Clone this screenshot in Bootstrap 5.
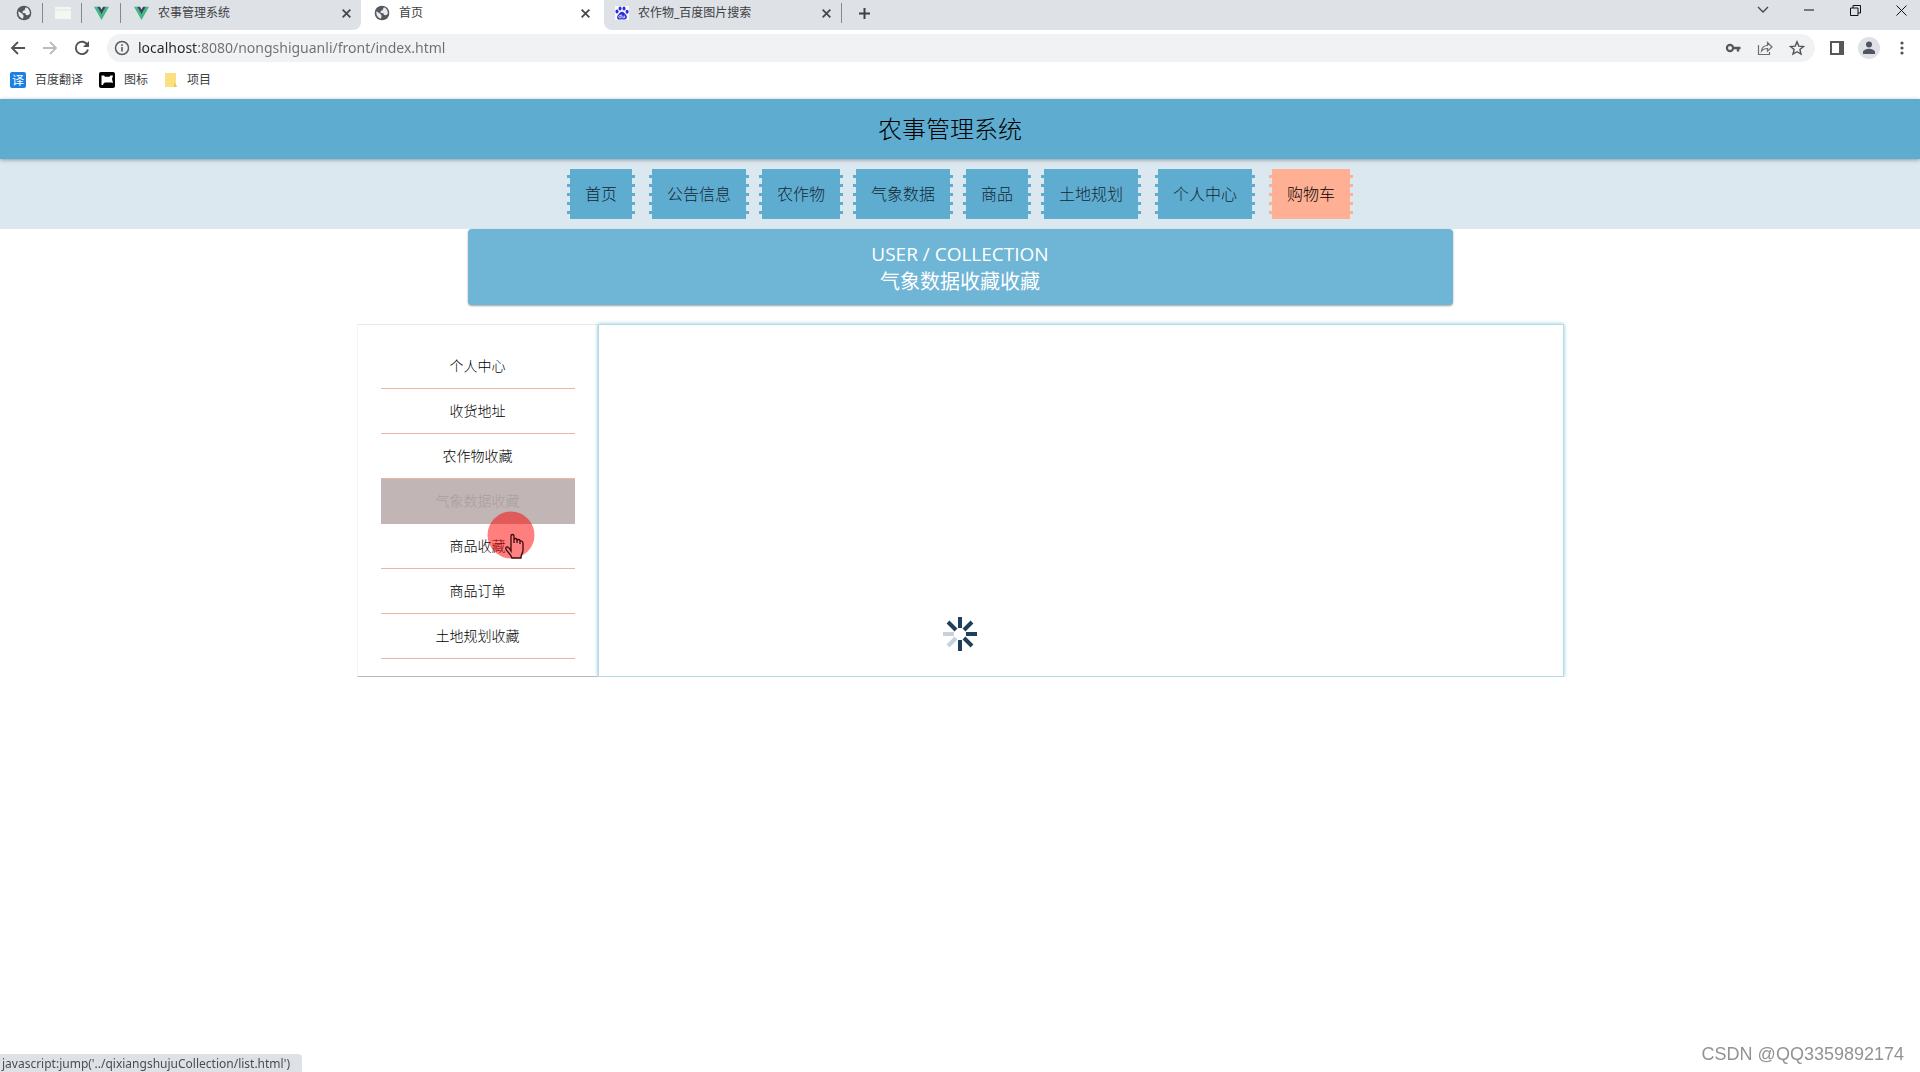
<!DOCTYPE html>
<html lang="zh-CN">
<head>
<meta charset="utf-8">
<meta name="viewport" content="width=device-width, initial-scale=1">
<title>首页</title>
<link href="https://cdn.jsdelivr.net/npm/bootstrap@5.3.0/dist/css/bootstrap.min.css" rel="stylesheet">
<style>
  :root { --sky: #5facd1; --peach: #ffaf94; --ink: #5a5d62; }
  body { font-family: "Noto Sans", "Noto Sans CJK SC", sans-serif; font-size: 14px; background: #fff; color: #222; }
  a { color: inherit; text-decoration: none; }
  button { border: 0; background: none; padding: 0; color: inherit; display: flex; align-items: center; justify-content: center; }
  svg { display: block; flex: none; }

  /* browser window */
  .tabstrip { height: 30px; background: #dee1e6; font-size: 12px; color: #3c4043; }
  .tabstrip > * { height: 100%; padding-bottom: 4px; }
  .pin { width: 39px; justify-content: center; position: relative; }
  .sep-line::after { content: ""; position: absolute; right: 0; top: 3px; height: 20px; width: 1px; background: #85888d; }
  .page-tab { width: 240px; padding: 0 9px 0 13px; gap: 9px; position: relative; }
  .page-tab.current { background: #fff; width: 243px; }
  .tab-before { border-bottom-right-radius: 8px; background: #dee1e6; }
  .page-tab.tab-after { border-bottom-left-radius: 8px; background: #dee1e6; width: 238px; padding-left: 11px; padding-right: 10px; }
  .tab-under { background: #fff; }
  .win-buttons { gap: 30px; padding-right: 11px; color: #111; padding-bottom: 10px !important; }
  .win-buttons button { width: 16px; }
  .toolbar-row { height: 35px; padding: 0 10px; color: var(--ink); }
  .toolbar-row .side-tools { gap: 16px; }
  .toolbar-row .end-tools { gap: 14px; }
  .address { height: 28px; border-radius: 14px; background: #f1f2f4; padding: 0 10px 0 7px; margin-left: 17px; margin-right: 15px; gap: 8px; }
  .address input { border: 0; outline: 0; padding: 0; font-size: 14px; height: 26px;
    background: linear-gradient(90deg, #26282b 60px, #6c6f73 60px); -webkit-background-clip: text; background-clip: text; color: transparent; }
  .bookmarks { height: 34px; padding: 0 10px 4px; gap: 16px; font-size: 12px; color: #3c4043; }
  .bookmarks a { gap: 9px; }

  /* site */
  .site-title { height: 60px; background: var(--sky); font-size: 24px; font-weight: 300; color: #000; padding: 0 20px 2px 0;
    box-shadow: 0 1px 4px rgba(0,0,0,.35); position: relative; font-family: "Noto Sans CJK SC", sans-serif; }
  .site-nav { background: #dce8f0; height: 70px; gap: 20px; font-size: 16px; font-weight: 300; font-family: "Noto Sans CJK SC", sans-serif; }
  .nav-set { gap: 16px; }
  .ticket { --tone: var(--sky); height: 50px; padding: 0 15px 2px; background: var(--tone); color: #142832; position: relative; display: flex; align-items: center; }
  .ticket::before, .ticket::after { content: ""; position: absolute; top: 6px; height: 39px; width: 3px;
    background: linear-gradient(var(--tone) 3px, transparent 3px) 0 0 / 3px 9px repeat-y; }
  .ticket::before { left: -3px; }
  .ticket::after { right: -3px; }
  .ticket.cart { --tone: var(--peach); color: #000; }
  .banner { max-width: 985px; height: 76px; padding-top: 2px; background: #6fb5d6; border-radius: 4px; box-shadow: 0 1px 2px rgba(60,40,40,.45);
    color: #fff; font-size: 20px; line-height: 28px; text-align: center; font-family: "Open Sans", "Noto Sans CJK SC", sans-serif; }
  .banner .en { font-size: 19px; }
  .member { max-width: 1207px; margin-top: 19px; position: relative; }
  .side-menu { width: 241px; padding: 19px 22px 17px 23px; border: 1px solid #f3f5f7; border-top-color: #e2eaee; border-bottom-color: #b9b9bc; text-align: center;
    font-family: "Noto Sans CJK SC", sans-serif; }
  .side-menu a { display: block; height: 45px; line-height: 43px; border-bottom: 1px solid #ecb5a2; font-weight: 300; color: #000; }
  .side-menu a.chosen { background: #c2b5b5; border-color: #c2b5b5; color: #a79f9f; }
  .panel { border: 1px solid #b7d9e4; box-shadow: 0 0 4px #8fc8da; }
  .spinner-mark { position: absolute; left: 586px; top: 293px; }
  .pointer-mark { position: absolute; left: 130px; top: 187px; }
  .status-tip { position: fixed; left: 0; bottom: 0; width: 302px; height: 18px; background: #dee1e6; border-top-right-radius: 4px;
    padding-left: 2px; font-size: 12px; line-height: 20px; color: #4a4d51; white-space: nowrap; }
  .credit { position: fixed; right: 16px; bottom: 6px; font: 18px/24px "Liberation Sans", sans-serif; color: #939393; }
</style>
</head>
<body>
<svg width="0" height="0" class="position-absolute" aria-hidden="true">
  <symbol id="globe" viewBox="0 0 24 24"><path fill="#55585d" d="M12 1a11 11 0 1 0 0 22 11 11 0 0 0 0-22z"/><path fill="#e9ebee" d="M3.500 9.500l6 3.500 2 3-1 4.500C6 19.500 3 15.500 3.500 9.500zM15 3.500c4 1.500 6 5 5.800 9.500l-2.800 2.500-3-.5-1-2.500-4-.5V9l3-1 .5-2.500z"/></symbol>
  <symbol id="vue" viewBox="0 0 24 22"><path fill="#41b883" d="M0 1h5l7 12 7-12h5L12 22z"/><path fill="#35495e" d="M5 1h4.500L12 5.500 14.500 1H19l-7 12z"/></symbol>
  <symbol id="cross" viewBox="0 0 10 10"><path stroke="#45484d" stroke-width="1.600" d="M1.500 1.500l7 7M8.500 1.500l-7 7"/></symbol>
</svg>

<header>
  <div class="tabstrip d-flex">
    <div class="pin sep-line d-flex align-items-center ms-1"><svg width="16" height="16"><use href="#globe"/></svg></div>
    <div class="pin sep-line d-flex align-items-center"><svg width="16" height="12"><rect width="16" height="12" fill="#f3f6f1"/><path d="M0 3h16" stroke="#dfe6dc"/></svg></div>
    <div class="pin sep-line d-flex align-items-center"><svg width="15" height="14"><use href="#vue"/></svg></div>
    <div class="tab-under p-0"><div class="page-tab tab-before d-flex align-items-center h-100 pb-1"><svg width="15" height="14"><use href="#vue"/></svg><span class="flex-grow-1">农事管理系统</span><button aria-label="关闭"><svg width="11" height="11"><use href="#cross"/></svg></button></div></div>
    <div class="page-tab current d-flex align-items-center pb-1"><svg width="16" height="16"><use href="#globe"/></svg><span class="flex-grow-1">首页</span><button aria-label="关闭" class="me-1"><svg width="11" height="11"><use href="#cross"/></svg></button></div>
    <div class="tab-under p-0"><div class="page-tab tab-after sep-line d-flex align-items-center h-100 pb-1">
      <svg width="14" height="16" viewBox="0 0 16 16"><rect width="16" height="16" fill="#f8f9ff"/><g fill="#2b2fd0"><ellipse cx="2.300" cy="6.300" rx="1.700" ry="2.200"/><ellipse cx="5.800" cy="2.800" rx="1.700" ry="2.300"/><ellipse cx="10.300" cy="2.800" rx="1.700" ry="2.300"/><ellipse cx="13.800" cy="6.600" rx="1.700" ry="2.200"/><path d="M8 6.500c2 0 3 2 4.300 3.300 2 2 1.700 5.700-1.500 5.700-1.500 0-1.800-.4-2.800-.4s-1.500.4-2.900.4C2 15.500 1.700 12 3.700 9.900 5 8.500 6 6.500 8 6.500z"/></g><path d="M7 9.500v4H5.500a1.200 1.200 0 0 1 0-2.500H7M9 11v2.500h2V11" fill="none" stroke="#fff" stroke-width=".9"/></svg>
      <span class="flex-grow-1">农作物_百度图片搜索</span><button aria-label="关闭"><svg width="11" height="11"><use href="#cross"/></svg></button></div></div>
    <button aria-label="新标签页" class="ms-3"><svg width="13" height="13"><path d="M6.500 1v11M1 6.500h11" stroke="#3c4043" stroke-width="2"/></svg></button>
    <div class="win-buttons d-flex align-items-center ms-auto">
      <button aria-label="标签列表"><svg width="12" height="8"><path d="M1 1l5 5 5-5" fill="none" stroke="#444" stroke-width="1.300"/></svg></button>
      <button aria-label="最小化"><svg width="10" height="2"><path d="M0 1h10" stroke="#111"/></svg></button>
      <button aria-label="还原"><svg width="11" height="11"><path d="M.5 3h7.500v7.500H.5zM3 3V.5h7.500V8H8" fill="none" stroke="#111"/></svg></button>
      <button aria-label="关闭窗口"><svg width="11" height="11"><path d="M.5.500l10 10M10.500.500l-10 10" stroke="#111"/></svg></button>
    </div>
  </div>

  <div class="toolbar-row d-flex align-items-center">
    <div class="side-tools d-flex">
      <button aria-label="后退"><svg width="16" height="16"><path d="M15 8H2M8 2L2 8l6 6" fill="none" stroke="#505359" stroke-width="1.800"/></svg></button>
      <button aria-label="前进"><svg width="16" height="16"><path d="M1 8h13M8 2l6 6-6 6" fill="none" stroke="#b9bbbe" stroke-width="1.800"/></svg></button>
      <button aria-label="刷新"><svg width="16" height="16"><path d="M13.500 5A6.200 6.200 0 1 0 14 9.500" fill="none" stroke="#505359" stroke-width="1.900"/><path d="M15 1v6H9z" fill="#505359"/></svg></button>
    </div>
    <div class="address d-flex align-items-center flex-grow-1">
      <svg width="16" height="16"><circle cx="8" cy="8" r="6.500" fill="none" stroke="#5a5d62" stroke-width="1.500"/><path d="M8 7v4.500M8 4.200v1.700" stroke="#5a5d62" stroke-width="1.600"/></svg>
      <input class="flex-grow-1" type="text" aria-label="地址" value="localhost:8080/nongshiguanli/front/index.html">
      <div class="side-tools d-flex">
        <button aria-label="密码"><svg width="16" height="16"><circle cx="5" cy="8" r="3.100" fill="none" stroke="#55585d" stroke-width="2.200"/><path d="M8 8h7.500M13 8v3.500" stroke="#55585d" stroke-width="2.400"/></svg></button>
        <button aria-label="分享"><svg width="16" height="16"><path d="M1.500 5v9.500h11V12M4.500 11c.5-4 2.500-5.500 6-5.500V2.500L15 7l-4.500 4.200V8.500c-3 0-4.500.5-6 2.500z" fill="none" stroke="#6a6d72" stroke-width="1.200"/></svg></button>
        <button aria-label="收藏"><svg width="16" height="16"><path d="M8 1.800l1.800 4.300 4.700.4-3.600 3 1.100 4.600L8 11.700l-4 2.400 1.100-4.600-3.600-3 4.700-.4z" fill="none" stroke="#505359" stroke-width="1.400"/></svg></button>
      </div>
    </div>
    <div class="end-tools d-flex align-items-center">
      <button aria-label="侧边栏"><svg width="14" height="14"><path d="M1 1h12v12H1z" fill="none" stroke="#55585d" stroke-width="2"/><path d="M9 1h4v12H9z" fill="#55585d"/></svg></button>
      <button aria-label="用户"><svg width="22" height="22"><circle cx="11" cy="11" r="11" fill="#dfe1e7"/><circle cx="11" cy="7.500" r="3" fill="#505560"/><path d="M5 17v-2c0-2 3.500-3.300 6-3.300s6 1.300 6 3.300v2z" fill="#505560"/></svg></button>
      <button aria-label="菜单"><svg width="16" height="16"><g fill="#505359"><circle cx="8" cy="3" r="1.600"/><circle cx="8" cy="8" r="1.600"/><circle cx="8" cy="13" r="1.600"/></g></svg></button>
    </div>
  </div>

  <div class="bookmarks d-flex align-items-center">
    <a href="#" class="d-flex align-items-center"><svg width="16" height="16"><rect width="16" height="16" rx="2" fill="#1b7fe6"/><text x="8" y="13" font-size="12" text-anchor="middle" fill="#fff">译</text></svg>百度翻译</a>
    <a href="#" class="d-flex align-items-center"><svg width="16" height="16"><rect width="16" height="16" rx="2" fill="#000"/><path d="M2.500 13V3.500h2.500l1 1.200h4.500l1-1.200H14l-1 3.500 1 4-1.500-.5H6l-1.500 1-.5 1.500z" fill="#fff"/></svg>图标</a>
    <a href="#" class="d-flex align-items-center"><svg width="14" height="14"><path d="M1 0h11v11l1 3H1z" fill="#fbdf83"/><path d="M10 14V9l3 5z" fill="#e9c65d"/></svg>项目</a>
  </div>
</header>

<main>
  <h1 class="site-title d-flex align-items-center justify-content-center m-0">农事管理系统</h1>
  <nav class="site-nav d-flex align-items-center justify-content-center">
    <a class="ticket" href="#">首页</a>
    <div class="nav-set d-flex">
      <a class="ticket" href="#">公告信息</a>
      <a class="ticket" href="#">农作物</a>
      <a class="ticket" href="#">气象数据</a>
      <a class="ticket" href="#">商品</a>
      <a class="ticket" href="#">土地规划</a>
    </div>
    <a class="ticket" href="#">个人中心</a>
    <a class="ticket cart" href="#">购物车</a>
  </nav>

  <div class="banner mx-auto d-flex flex-column justify-content-center">
    <div class="en">USER / COLLECTION</div>
    <div>气象数据收藏收藏</div>
  </div>

  <div class="member mx-auto d-flex">
    <nav class="side-menu flex-shrink-0">
      <a href="#">个人中心</a>
      <a href="#">收货地址</a>
      <a href="#">农作物收藏</a>
      <a href="#" class="chosen">气象数据收藏</a>
      <a href="#">商品收藏</a>
      <a href="#">商品订单</a>
      <a href="#">土地规划收藏</a>
    </nav>
    <section class="panel flex-grow-1"></section>
    <svg class="spinner-mark" width="34" height="34" viewBox="-17 -17 34 34" role="img" aria-label="加载中">
      <g stroke="#1f3f5b" stroke-width="4"><path d="M0-17V-6M0 6V17M6 0H17M4-4l8-8M4 4l8 8M-4-4l-8-8"/><path d="M-6 0H-17M-4 4l-8 8" stroke="#c5d2dc"/></g>
    </svg>
    <svg class="pointer-mark" width="48" height="50">
      <circle cx="24" cy="24" r="23.500" fill="#f00" fill-opacity=".5"/>
      <path d="M24 40v-15c0-2 3-2 3 0v7-3c0-2 3-2 3 0v3-2c0-2 3-2 3 0v3-2c0-2 3-1 3 1v7c0 3-2 4-2 8h-9c-1-4-5-6-6-9-1-2 1-3 3-1z" fill="#ff8080" stroke="#3a0a0a" stroke-width="1.300"/>
    </svg>
  </div>
</main>

<div class="status-tip">javascript:jump('../qixiangshujuCollection/list.html')</div>
<div class="credit">CSDN @QQ3359892174</div>
<script src="https://cdn.jsdelivr.net/npm/bootstrap@5.3.0/dist/js/bootstrap.bundle.min.js"></script>
</body>
</html>
